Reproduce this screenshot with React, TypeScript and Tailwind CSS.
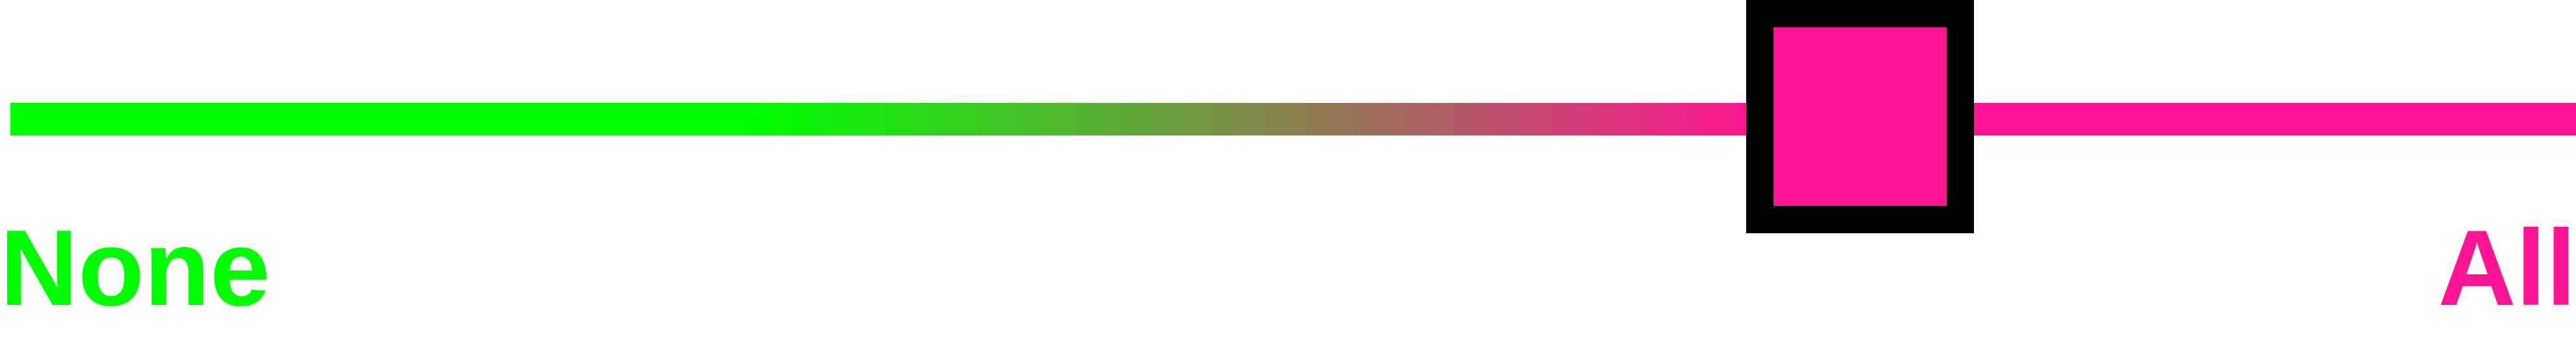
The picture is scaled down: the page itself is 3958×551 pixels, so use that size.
import React from "react";

const THUMB_LEFT = 2683;

export default function App() {
  return (
    <div className="w-[3958px] h-[551px] bg-white overflow-hidden font-['Liberation_Sans',Arial,sans-serif]">
      {/* Slider */}
      <div className="relative h-[328px] pt-[158px]">
        <div className="ml-4 h-[50px] bg-[linear-gradient(to_right,#00ff00_1144px,#ff1493_2684px)]" />
        <div
          className="absolute top-0 w-[350px] h-[358px] border-[42px] border-black bg-[#ff1493]"
          style={{ left: THUMB_LEFT }}
        />
      </div>

      {/* Labels */}
      <div className="flex justify-between text-[166px] font-bold leading-none">
        <span className="text-[#00ff00]">None</span>
        <span className="text-[#ff1493]">All</span>
      </div>
    </div>
  );
}
